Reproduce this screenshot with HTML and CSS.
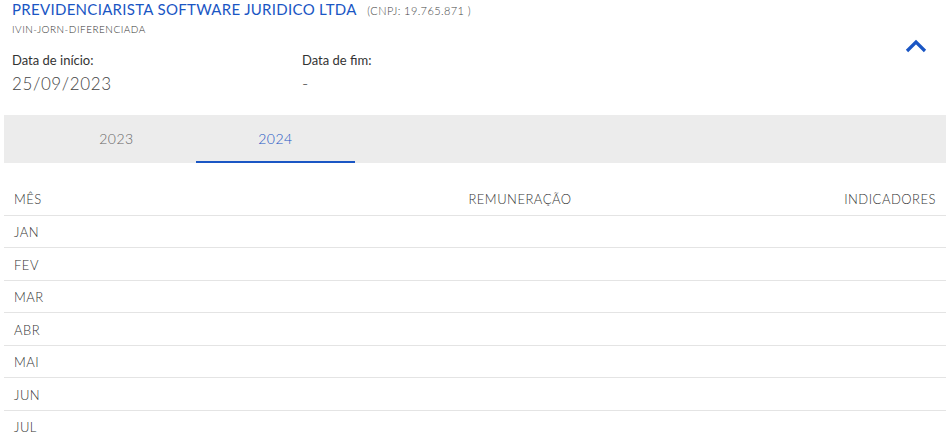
FILE: index.html
```html
<!DOCTYPE html>
<html lang="pt-BR">
<head>
  <meta charset="UTF-8" />
  <title>Vínculo</title>
  <link rel="stylesheet" href="styles.css">
</head>
<body>

  <div class="vinculo">
    <!-- Cabeçalho do vínculo -->
    <div class="vinculo-header">
      <div class="vinculo-info">
        <h1 class="empresa">
          PREVIDENCIARISTA SOFTWARE JURIDICO LTDA
          <span class="cnpj">(CNPJ: 19.765.871 )</span>
        </h1>
        <p class="tipo">IVIN-JORN-DIFERENCIADA</p>

        <div class="datas">
          <div class="data">
            <span class="data-label">Data de início:</span>
            <span class="data-valor">25/09/2023</span>
          </div>
          <div class="data">
            <span class="data-label">Data de fim:</span>
            <span class="data-valor">-</span>
          </div>
        </div>
      </div>

      <button class="toggle" type="button" aria-label="Recolher">
        <svg width="22" height="14" viewBox="0 0 22 14">
          <path d="M2 12 L11 3 L20 12" fill="none" stroke="#1a56c4" stroke-width="3.2" />
        </svg>
      </button>
    </div>

    <!-- Abas por ano -->
    <div class="tabs">
      <button class="tab" type="button">2023</button>
      <button class="tab active" type="button">2024</button>
    </div>

    <!-- Tabela de meses -->
    <table class="meses">
      <thead>
        <tr>
          <th class="col-mes">MÊS</th>
          <th class="col-rem">REMUNERAÇÃO</th>
          <th class="col-ind">INDICADORES</th>
        </tr>
      </thead>
      <tbody>
        <tr><td>JAN</td><td></td><td></td></tr>
        <tr><td>FEV</td><td></td><td></td></tr>
        <tr><td>MAR</td><td></td><td></td></tr>
        <tr><td>ABR</td><td></td><td></td></tr>
        <tr><td>MAI</td><td></td><td></td></tr>
        <tr><td>JUN</td><td></td><td></td></tr>
        <tr><td>JUL</td><td></td><td></td></tr>
      </tbody>
    </table>
  </div>

</body>
</html>
```

FILE: styles.css
```css
/* === Body === */
body {
  margin: 0;
  background: #ffffff;
  font-family: 'Lato', 'Open Sans', Arial, sans-serif;
  color: #444444;
}

.vinculo {
  padding-left: 4px;
}

/* === Header === */
.vinculo-header {
  display: flex;
  justify-content: space-between;
  padding: 0 0 0 8px;
  height: 115px;
  box-sizing: border-box;
}

.empresa {
  margin: 0;
  font-size: 15px;
  font-weight: 400;
  color: #1a56c4;
  line-height: 18px;
  letter-spacing: 0.3px;
}

.empresa .cnpj {
  margin-left: 7px;
  font-size: 11px;
  font-weight: 300;
  color: #444444;
  letter-spacing: 0.4px;
}

.tipo {
  margin: 2px 0 0;
  font-size: 10px;
  line-height: 14px;
  font-weight: 300;
  color: #333333;
  letter-spacing: 0.5px;
}

.datas {
  display: flex;
  margin-top: 15px;
}

.data {
  display: flex;
  flex-direction: column;
  width: 290px;
}

.data-label {
  font-size: 13px;
  color: #333333;
  line-height: 18px;
}

.data-valor {
  margin-top: 4px;
  font-size: 17px;
  font-weight: 300;
  color: #444444;
  line-height: 22px;
  letter-spacing: 0.6px;
}

.toggle {
  background: none;
  border: none;
  padding: 0;
  margin: 37px 19px 0 0;
  height: 20px;
  cursor: pointer;
}

/* === Tabs === */
.tabs {
  display: flex;
  height: 48px;
  padding-left: 33px;
  background: #ececec;
}

.tab {
  width: 159px;
  background: none;
  border: none;
  border-bottom: 2px solid transparent;
  font-family: inherit;
  font-size: 14px;
  font-weight: 300;
  letter-spacing: 0.5px;
  color: #666666;
  cursor: pointer;
}

.tab.active {
  color: #1a56c4;
  border-bottom-color: #1a56c4;
}

/* === Table === */
.meses {
  width: 100%;
  border-collapse: collapse;
  margin-top: 20px;
}

.meses th,
.meses td {
  padding: 0 10px;
  height: 31.5px;
  font-size: 13px;
  font-weight: 300;
  letter-spacing: 0.5px;
  color: #333333;
  border-bottom: 1px solid #e4e4e4;
}

.meses td {
  padding-top: 2px;
  height: 29.5px;
}

.col-mes {
  text-align: left;
  width: 330px;
}

.col-rem {
  text-align: center;
}

.col-ind {
  text-align: right;
  width: 240px;
}
```
